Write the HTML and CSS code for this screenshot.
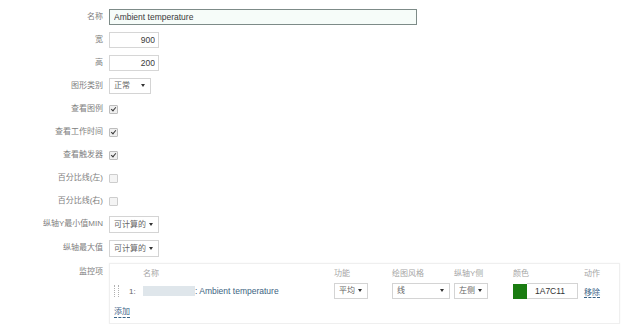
FILE: index.html
```html
<!DOCTYPE html>
<html lang="zh-CN">

<head>
    <meta charset="UTF-8">
    <title>图形</title>
    <link rel="stylesheet" href="styles.css">
</head>

<body>
    <form class="graph-form">
        <label class="lbl">名称</label>
        <div class="ctl"><input type="text" class="txt txt-name" value="Ambient temperature"></div>

        <label class="lbl">宽</label>
        <div class="ctl"><input type="text" class="txt txt-num" value="900"></div>

        <label class="lbl">高</label>
        <div class="ctl"><input type="text" class="txt txt-num" value="200"></div>

        <label class="lbl">图形类别</label>
        <div class="ctl"><span class="sel sel-type">正常</span></div>

        <label class="lbl">查看图例</label>
        <div class="ctl"><span class="chk on"></span></div>

        <label class="lbl">查看工作时间</label>
        <div class="ctl"><span class="chk on"></span></div>

        <label class="lbl">查看触发器</label>
        <div class="ctl"><span class="chk on"></span></div>

        <label class="lbl">百分比线(左)</label>
        <div class="ctl"><span class="chk"></span></div>

        <label class="lbl">百分比线(右)</label>
        <div class="ctl"><span class="chk"></span></div>

        <label class="lbl">纵轴Y最小值MIN</label>
        <div class="ctl tall"><span class="sel sel-calc">可计算的</span></div>

        <label class="lbl">纵轴最大值</label>
        <div class="ctl tall"><span class="sel sel-calc">可计算的</span></div>

        <label class="lbl lbl-top">监控项</label>
        <div class="items">
            <div class="items-grid">
                <span></span><span></span>
                <span class="th">名称</span>
                <span class="th">功能</span>
                <span class="th">绘图风格</span>
                <span class="th">纵轴Y侧</span>
                <span class="th">颜色</span>
                <span class="th">动作</span>

                <span class="drag"></span>
                <span class="num">1:</span>
                <span class="item-name"><span class="blur"></span>: Ambient temperature</span>
                <span><span class="sel sel-func">平均</span></span>
                <span><span class="sel sel-style">线</span></span>
                <span><span class="sel sel-axis">左侧</span></span>
                <span class="color"><span class="swatch"></span><span class="hex">1A7C11</span></span>
                <span><a class="link">移除</a></span>
            </div>
            <a class="link add">添加</a>
        </div>
    </form>
</body>

</html>
```

FILE: styles.css
```css
body {
    margin: 0;
    background: #fff;
    font-family: 'Liberation Sans', 'Noto Sans CJK SC', sans-serif;
    font-size: 8px;
    color: #444;
}

.graph-form {
    display: grid;
    grid-template-columns: 103px 1fr;
    column-gap: 6px;
    row-gap: 7px;
    padding-top: 9px;
}

.lbl {
    height: 16px;
    line-height: 16px;
    text-align: right;
    color: #808080;
    white-space: nowrap;
}

.lbl-top {
    line-height: 15px;
}

.ctl {
    height: 16px;
    display: flex;
    align-items: center;
}

.ctl.tall {
    height: 17px;
}

.txt {
    box-sizing: border-box;
    height: 16px;
    margin: 0;
    padding: 0 4px;
    border: 1px solid #d6d6d6;
    font-family: inherit;
    font-size: 8.5px;
    color: #3a3a3a;
    background: #fff;
    outline: none;
}

.txt-name {
    width: 308px;
    border-color: #7d8b88;
    background: #f6fcf9;
}

.txt-num {
    width: 50px;
    text-align: right;
    padding-right: 3px;
}

.sel {
    box-sizing: border-box;
    position: relative;
    display: inline-block;
    height: 16px;
    line-height: 14px;
    padding-left: 4px;
    border: 1px solid #d4d4d4;
    background: #fff;
    color: #666;
    white-space: nowrap;
}

.ctl.tall .sel {
    height: 17px;
    line-height: 15px;
}

.sel::after {
    content: "";
    position: absolute;
    right: 5px;
    top: 50%;
    margin-top: -2px;
    border-left: 2px solid transparent;
    border-right: 2px solid transparent;
    border-top: 3px solid #333;
}

.sel-type { width: 42px; }
.sel-calc { width: 50px; }
.sel-func { width: 34px; }
.sel-style { width: 58px; }
.sel-axis { width: 34px; }

.chk {
    box-sizing: border-box;
    position: relative;
    width: 9px;
    height: 9px;
    border: 1px solid #cdcdcd;
    background: #f4f4f4;
    border-radius: 1px;
}

.chk.on {
    border-color: #bdbdbd;
    background: #efefef;
}

.chk.on::after {
    content: "";
    position: absolute;
    left: 2px;
    top: 0;
    width: 2px;
    height: 4px;
    border-right: 1.5px solid #3a3a3a;
    border-bottom: 1.5px solid #3a3a3a;
    transform: rotate(40deg);
}

.items {
    box-sizing: border-box;
    width: 511px;
    margin-top: -1px;
    padding: 4px 0 5px 4px;
    border: 1px solid #efefef;
    box-shadow: 0 0 2px rgba(0, 0, 0, 0.04);
}

.items-grid {
    display: grid;
    grid-template-columns: 15px 14px 191px 58px 62px 59px 71px 1fr;
    row-gap: 4px;
    align-items: center;
}

.th {
    line-height: 11px;
    color: #a6a6a6;
}

.drag {
    width: 3px;
    height: 12px;
    border-left: 1px dotted #b0b0b0;
    border-right: 1px dotted #b0b0b0;
}

.num {
    color: #666;
}

.item-name {
    display: flex;
    align-items: center;
    height: 16px;
    font-size: 8.5px;
    color: #3d6482;
}

.blur {
    display: inline-block;
    width: 52px;
    height: 10px;
    background: #dfe6eb;
}

.color {
    display: flex;
    align-items: center;
}

.swatch {
    width: 14px;
    height: 15px;
    background: #1a7c11;
}

.hex {
    box-sizing: border-box;
    width: 51px;
    height: 16px;
    line-height: 14px;
    padding-left: 8px;
    border: 1px solid #d4d4d4;
    border-left: none;
    font-size: 8.5px;
    color: #333;
}

.link {
    color: #3a6487;
    border-bottom: 1px dashed #3a6487;
    cursor: pointer;
}

.add {
    display: inline-block;
    margin-top: 8px;
    line-height: 10px;
}
```
